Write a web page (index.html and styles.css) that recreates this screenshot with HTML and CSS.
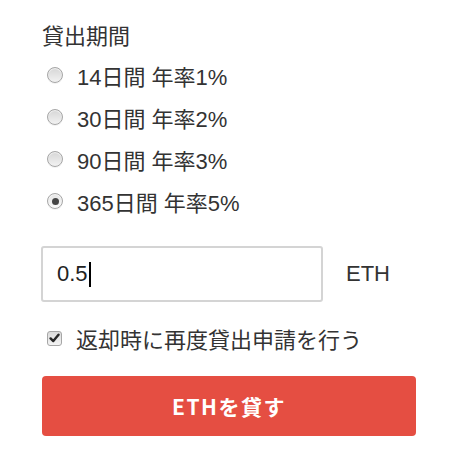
FILE: index.html
```html
<!DOCTYPE html>
<html lang="ja">
<head>
<meta charset="utf-8">
<link rel="stylesheet" href="styles.css">
</head>
<body>
<form class="lend">
  <div class="title">貸出期間</div>
  <div class="options">
    <label class="opt"><span class="radio"></span><span>14日間 年率1%</span></label>
    <label class="opt"><span class="radio"></span><span>30日間 年率2%</span></label>
    <label class="opt"><span class="radio"></span><span>90日間 年率3%</span></label>
    <label class="opt"><span class="radio checked"></span><span>365日間 年率5%</span></label>
  </div>
  <div class="amount">
    <div class="input"><span>0.5</span><span class="caret"></span></div>
    <span class="unit">ETH</span>
  </div>
  <label class="check"><span class="box"><svg width="11" height="10" viewBox="0 0 11 10"><path d="M1.6 5.4 L4.3 8.1 L9.5 1.8" fill="none" stroke="#262626" stroke-width="2.4" stroke-linecap="round" stroke-linejoin="round"/></svg></span><span>返却時に再度貸出申請を行う</span></label>
  <button type="button" class="submit">ETHを貸す</button>
</form>
</body>
</html>
```
FILE: styles.css
```css
html, body {
  margin: 0;
  background: #fff;
}
.lend {
  padding: 24px 0 0 42px;
  width: 374px;
  font-family: "Liberation Sans", "Noto Sans CJK JP", sans-serif;
  color: #333;
  font-size: 22px;
}
.title {
  line-height: 26px;
  height: 26px;
}
.options {
  margin-top: 4px;
  display: flex;
  flex-direction: column;
}
.opt {
  height: 42px;
  display: flex;
  align-items: center;
  gap: 14px;
}
.radio {
  box-sizing: border-box;
  width: 16px;
  height: 16px;
  margin-left: 5px;
  border-radius: 50%;
  border: 1px solid #a6a6a6;
  background: linear-gradient(#d6d6d6, #f2f2f2);
  box-shadow: inset 0 1px 1px rgba(255,255,255,0.7), 0 1px 0 rgba(0,0,0,0.05);
  display: flex;
  align-items: center;
  justify-content: center;
}
.radio.checked {
  background: linear-gradient(#e4e4e4, #fbfbfb);
}
.radio.checked::after {
  content: "";
  width: 7px;
  height: 7px;
  border-radius: 50%;
  background: #454545;
}
.amount {
  margin-top: 24px;
  display: flex;
  align-items: center;
  gap: 23px;
}
.input {
  box-sizing: border-box;
  width: 282px;
  height: 56px;
  margin-left: -1px;
  border: 2px solid #d4d4d4;
  border-radius: 3px;
  padding-left: 14px;
  display: flex;
  align-items: center;
  font-size: 22px;
  color: #222;
}
.caret {
  width: 2px;
  height: 25px;
  background: #000;
  margin-left: 1px;
}
.unit {
  font-size: 22px;
  color: #333;
}
.check {
  margin-top: 21px;
  height: 30px;
  display: flex;
  align-items: center;
  gap: 14px;
}
.box {
  box-sizing: border-box;
  width: 15px;
  height: 15px;
  margin-left: 5px;
  border: 1px solid #a6a6a6;
  border-radius: 3px;
  background: linear-gradient(#dadada, #f4f4f4);
  display: flex;
  align-items: center;
  justify-content: center;
}
.box svg {
  display: block;
}
.submit {
  margin-top: 23px;
  display: block;
  width: 374px;
  height: 60px;
  border: 0;
  border-radius: 4px;
  background: #e54e42;
  color: #fff;
  font-family: "Noto Sans CJK JP", sans-serif;
  font-weight: 700;
  font-size: 21px;
  letter-spacing: 1.5px;
  padding: 0;
}
```
